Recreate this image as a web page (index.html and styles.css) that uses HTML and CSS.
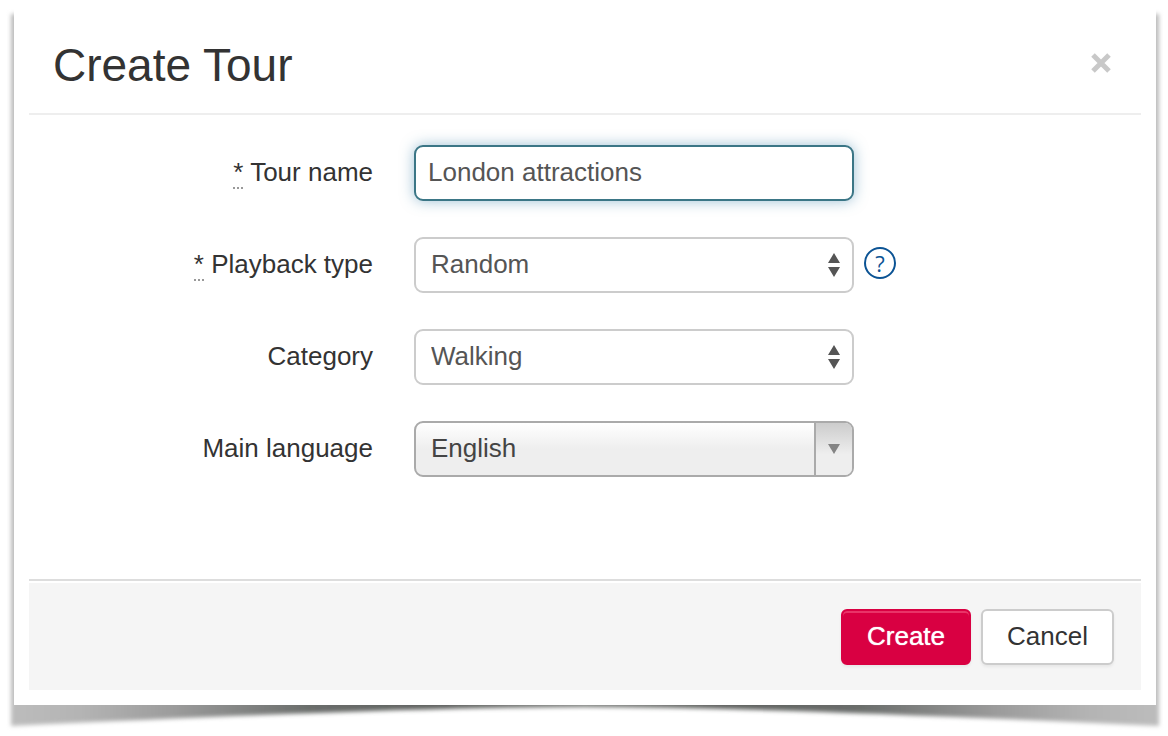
FILE: index.html
```html
<!DOCTYPE html>
<html lang="en">
<head>
    <meta charset="UTF-8">
    <meta name="viewport" content="width=device-width, initial-scale=1.0">
    <title>Create Tour</title>
    <link rel="stylesheet" href="styles.css">
</head>
<body>
<div class="page">
    <!-- curled paper shadow behind the dialog -->
    <svg class="paper-shadow" viewBox="0 0 1168 736" preserveAspectRatio="none" aria-hidden="true">
        <defs>
            <linearGradient id="edge" x1="0" x2="1" y1="0" y2="0">
                <stop offset="0" stop-color="#bcbcbc"/>
                <stop offset="0.06" stop-color="#b4b4b4"/>
                <stop offset="0.14" stop-color="#9c9c9c"/>
                <stop offset="0.26" stop-color="#6a6d6b"/>
                <stop offset="0.38" stop-color="#5f615f"/>
                <stop offset="0.5" stop-color="#777977"/>
                <stop offset="0.62" stop-color="#5f615f"/>
                <stop offset="0.74" stop-color="#6a6d6b"/>
                <stop offset="0.86" stop-color="#9c9c9c"/>
                <stop offset="0.94" stop-color="#b4b4b4"/>
                <stop offset="1" stop-color="#bcbcbc"/>
            </linearGradient>
            <filter id="soft" x="-2%" y="-2%" width="104%" height="104%">
                <feGaussianBlur stdDeviation="2"/>
            </filter>
        </defs>
        <path d="M11 14H1159V726Q760 707 584 707Q410 707 11 726Z" fill="url(#edge)" filter="url(#soft)"/>
    </svg>

    <form class="dialog">
        <div class="dialog-header">
            <h1>Create Tour</h1>
            <button type="button" class="close" aria-label="Close">
                <svg width="20" height="20" viewBox="0 0 20 20" aria-hidden="true">
                    <path d="M2 2L18 18M18 2L2 18" stroke="#c8c8c8" stroke-width="5"/>
                </svg>
            </button>
        </div>

        <div class="dialog-body">
            <div class="row">
                <label for="tourName"><abbr title="required">*</abbr> Tour name</label>
                <div class="control">
                    <input type="text" id="tourName" class="field field-focus" value="London attractions">
                </div>
            </div>
            <div class="row">
                <label for="playbackType"><abbr title="required">*</abbr> Playback type</label>
                <div class="control">
                    <select id="playbackType" class="field">
                        <option>Random</option>
                    </select>
                    <svg class="arrows" width="12" height="24" viewBox="0 0 12 24" aria-hidden="true">
                        <path d="M6 0L12 10H0ZM0 14H12L6 24Z" fill="#555"/>
                    </svg>
                </div>
                <button type="button" class="help" aria-label="Help">?</button>
            </div>
            <div class="row">
                <label for="category">Category</label>
                <div class="control">
                    <select id="category" class="field">
                        <option>Walking</option>
                    </select>
                    <svg class="arrows" width="12" height="24" viewBox="0 0 12 24" aria-hidden="true">
                        <path d="M6 0L12 10H0ZM0 14H12L6 24Z" fill="#555"/>
                    </svg>
                </div>
            </div>
            <div class="row">
                <label for="language">Main language</label>
                <div class="control">
                    <select id="language" class="field field-combo">
                        <option>English</option>
                    </select>
                    <span class="combo-arrow">
                        <svg width="12" height="10" viewBox="0 0 12 10" aria-hidden="true">
                            <path d="M0 0H12L6 10Z" fill="#848484"/>
                        </svg>
                    </span>
                </div>
            </div>
        </div>

        <div class="dialog-footer">
            <button type="submit" class="btn btn-primary">Create</button>
            <button type="button" class="btn">Cancel</button>
        </div>
    </form>
</div>
</body>
</html>
```
FILE: styles.css
```css
* {
    box-sizing: border-box;
}

body {
    margin: 0;
    background-color: #fff;
    color: #333;
    font-family: "Liberation Sans", Arial, sans-serif;
    font-size: 26px;
    line-height: 30px;
}

.page {
    position: relative;
    padding: 8px 12px 31px 14px;
}

.paper-shadow {
    position: absolute;
    top: 0;
    left: 0;
    width: 100%;
    height: 100%;
}

.dialog {
    position: relative;
    padding: 0 15px 15px;
    background-color: #fff;
}

.dialog-header {
    display: flex;
    align-items: center;
    justify-content: space-between;
    padding: 30px 30px 20px 24px;
    border-bottom: 2px solid #eee;
}

h1 {
    margin: 0;
    font-size: 46px;
    font-weight: normal;
    line-height: 55px;
}

.close {
    display: flex;
    padding: 0 0 6px;
    border: none;
    background: none;
    cursor: pointer;
}

.dialog-body {
    display: flex;
    flex-direction: column;
    gap: 36px;
    padding: 30px 0 102px;
}

.row {
    display: flex;
    align-items: center;
}

label {
    flex: 0 0 344px;
    margin-right: 41px;
    padding-bottom: 2px;
    text-align: right;
}

abbr {
    border-bottom: 2px dotted #999;
    text-decoration: none;
}

.control {
    position: relative;
    flex: 0 1 440px;
}

.field {
    display: block;
    width: 100%;
    height: 56px;
    margin: 0;
    padding: 0 40px 2px 15px;
    border: 2px solid #ccc;
    border-radius: 9px;
    background-color: #fff;
    color: #555;
    font: inherit;
    appearance: none;
}

.field-focus {
    padding: 0 12px 2px;
    border-color: #3b7686;
    box-shadow: 0 0 14px rgba(60, 130, 170, 0.5);
    outline: none;
}

.field-combo {
    border-color: #aaa;
    background-image: linear-gradient(#fff, #eee 50%);
    color: #444;
}

.arrows {
    position: absolute;
    top: 16px;
    right: 14px;
    pointer-events: none;
}

.combo-arrow {
    position: absolute;
    top: 2px;
    right: 2px;
    bottom: 2px;
    display: flex;
    align-items: center;
    justify-content: center;
    width: 38px;
    border-left: 2px solid #aaa;
    border-radius: 0 7px 7px 0;
    background-image: linear-gradient(#ccc, #eee 60%);
    pointer-events: none;
}

.help {
    width: 32px;
    height: 32px;
    margin: 0 0 4px 10px;
    padding: 0;
    border: 2px solid #0b5394;
    border-radius: 50%;
    background: none;
    color: #0b5394;
    font-family: "Open Sans", sans-serif;
    font-size: 22px;
    line-height: 26px;
    cursor: pointer;
}

.dialog-footer {
    display: flex;
    justify-content: flex-end;
    gap: 10px;
    padding: 28px 27px 25px;
    border-top: 2px solid #ddd;
    background-color: #f5f5f5;
    box-shadow: inset 0 2px 0 #fff;
}

.btn {
    height: 56px;
    padding: 0 24px 2px;
    border: 2px solid #ccc;
    border-radius: 6px;
    background-color: #fff;
    box-shadow: 0 2px 3px rgba(0, 0, 0, 0.06);
    color: #333;
    font: inherit;
    cursor: pointer;
}

.btn-primary {
    border-color: #d90042;
    background-color: #d90042;
    box-shadow: inset 0 2px 0 #e93468, 0 2px 3px rgba(0, 0, 0, 0.06);
    color: #fff;
    text-shadow: 0 0 1px #fff;
}
```
